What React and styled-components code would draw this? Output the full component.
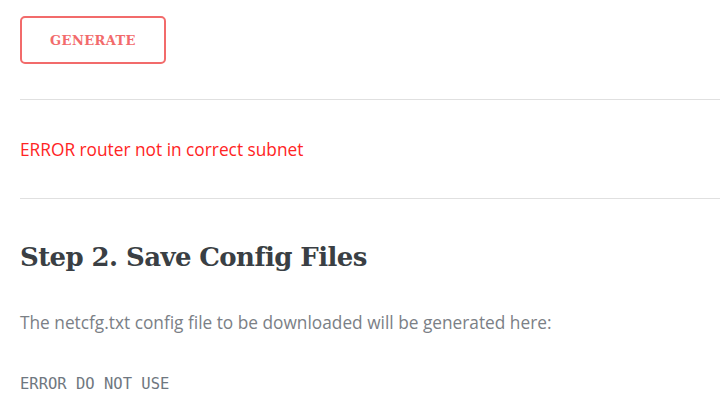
import styled, { createGlobalStyle } from "styled-components";

const GlobalStyle = createGlobalStyle`
  html, body {
    margin: 0;
    padding: 0;
    background: #fff;
  }
  body {
    font-family: "Open Sans", "Liberation Sans", sans-serif;
    -webkit-font-smoothing: antialiased;
  }
`;

const Page = styled.main`
  padding: 16px 8px 0 20px;
`;

const GenerateButton = styled.button`
  display: block;
  width: 146px;
  height: 48px;
  border: 2px solid #f26b6b;
  border-radius: 5px;
  background: #fff;
  color: #f26b6b;
  font-family: "DejaVu Serif", "Liberation Serif", serif;
  font-weight: bold;
  font-size: 13px;
  letter-spacing: 0.4px;
  text-transform: uppercase;
  cursor: pointer;
  padding: 0;
`;

const Rule = styled.hr`
  border: 0;
  border-top: 1px solid #e0e0e0;
  margin: ${({ $top }) => $top}px 0 0;
  height: 0;
`;

const ErrorText = styled.p`
  margin: 38px 0 36px;
  font-size: 17.3px;
  line-height: 24px;
  color: #ff2424;
`;

const StepTitle = styled.h2`
  margin: 41px 0 0;
  font-family: "DejaVu Serif", "Liberation Serif", serif;
  font-weight: bold;
  font-size: 26px;
  line-height: 34px;
  letter-spacing: -0.6px;
  color: #3a3f44;
`;

const Note = styled.p`
  margin: 37px 0 0;
  font-size: 17.3px;
  line-height: 24px;
  color: #7b8086;
`;

const Output = styled.pre`
  margin: 37px 0 0;
  font-family: "DejaVu Sans Mono", "Liberation Mono", monospace;
  font-size: 15.5px;
  line-height: 24px;
  color: #6f7780;
`;

export default function App() {
  return (
    <>
      <GlobalStyle />
      <Page>
        <GenerateButton>Generate</GenerateButton>
        <Rule $top={35} />
        <ErrorText>ERROR router not in correct subnet</ErrorText>
        <Rule $top={0} />
        <StepTitle>Step 2. Save Config Files</StepTitle>
        <Note>The netcfg.txt config file to be downloaded will be generated here:</Note>
        <Output>ERROR DO NOT USE</Output>
      </Page>
    </>
  );
}
